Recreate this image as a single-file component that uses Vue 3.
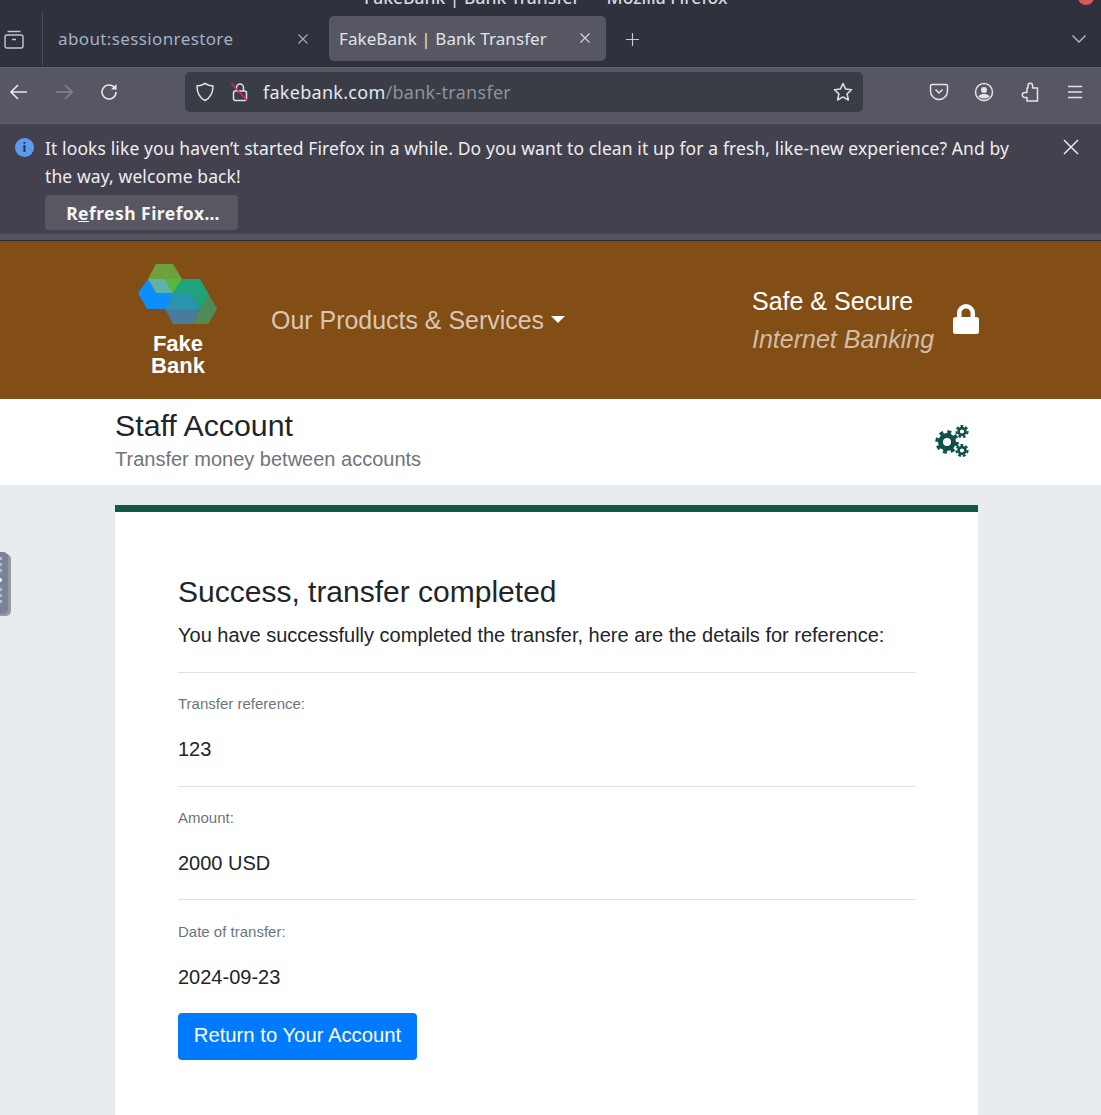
<script setup>
const details = [
  { label: 'Transfer reference:', value: '123' },
  { label: 'Amount:', value: '2000 USD' },
  { label: 'Date of transfer:', value: '2024-09-23' },
]
</script>

<template>
  <div class="page">
    <div class="chrome-top">
      <div class="title-row">
        <span class="window-title">FakeBank | Bank Transfer — Mozilla Firefox</span>
        <span class="win-dot"></span>
      </div>
      <div class="tab-row">
        <svg class="ico tabs-ico" viewBox="0 0 20 20" fill="none" stroke="#c5c8d0" stroke-width="1.4">
          <rect x="1" y="6" width="18" height="13" rx="2" />
          <path d="M3.5 2.5h13M8 10.5h4" />
        </svg>
        <span class="tab-sep"></span>
        <div class="tab">
          <span class="tab-text muted">about:sessionrestore</span>
          <svg class="tab-x" viewBox="0 0 12 12" stroke="#a9adb8" stroke-width="1.1"><path d="M1.5 1.5l9 9M10.5 1.5l-9 9" /></svg>
        </div>
        <div class="tab active">
          <span class="tab-text">FakeBank | Bank Transfer</span>
          <svg class="tab-x" viewBox="0 0 12 12" stroke="#d5d7dd" stroke-width="1.1"><path d="M1.5 1.5l9 9M10.5 1.5l-9 9" /></svg>
        </div>
        <svg class="plus" viewBox="0 0 16 16" stroke="#c9ccd3" stroke-width="1.2"><path d="M8 1v14M1 8h14" /></svg>
        <svg class="chev" viewBox="0 0 16 10" fill="none" stroke="#b9bcc5" stroke-width="1.3"><path d="M1.5 1.5L8 8l6.5-6.5" /></svg>
      </div>
    </div>

    <div class="toolbar">
      <div class="nav-btns">
        <svg class="ico" viewBox="0 0 20 20" fill="none" stroke="#e8e9ec" stroke-width="1.6"><path d="M18 10H2M9 3l-7 7 7 7" /></svg>
        <svg class="ico" viewBox="0 0 20 20" fill="none" stroke="#868891" stroke-width="1.6"><path d="M2 10h16M11 3l7 7-7 7" /></svg>
        <svg class="ico" viewBox="0 0 20 20" fill="none" stroke="#e8e9ec" stroke-width="1.6"><path d="M17 10a7 7 0 1 1-2.200-5.100L17 7" /><path d="M17.500 2v5.500H12" fill="#e8e9ec" stroke="none" /></svg>
      </div>
      <div class="urlbar">
        <svg class="ico shield" viewBox="0 0 20 20" fill="none" stroke="#dfe0e4" stroke-width="1.5"><path d="M10 1.500c2.500 1.600 5 2.300 8 2.500 0 7-2 11.500-8 14.500C4 15.500 2 11 2 4c3-.2 5.500-.9 8-2.500z" /></svg>
        <svg class="ico lock-off" viewBox="0 0 20 20" fill="none" stroke="#dfe0e4" stroke-width="1.500">
          <rect x="3.500" y="9" width="13" height="9.500" rx="2" />
          <path d="M6.500 9V5.500a3.500 3.500 0 0 1 7 0V9" />
          <path d="M1.500 1.500l15.500 17" stroke="#e22850" stroke-width="1.600" />
        </svg>
        <span class="url"><span class="url-host">fakebank.com</span><span class="url-path">/bank-transfer</span></span>
        <svg class="ico star" viewBox="0 0 20 20" fill="none" stroke="#dfe0e4" stroke-width="1.500" stroke-linejoin="round"><path d="M10 1.500l2.600 5.600 6 .7-4.500 4.100 1.300 6.100-5.400-3.100-5.400 3.100 1.300-6.100L1.400 7.800l6-.7z" /></svg>
      </div>
      <div class="tool-icons">
        <svg class="ico" viewBox="0 0 20 20" fill="none" stroke="#e3e4e8" stroke-width="1.500"><path d="M3 2.500h14a1.500 1.500 0 0 1 1.500 1.500v5a8.500 8.500 0 0 1-17 0V4A1.500 1.500 0 0 1 3 2.500z" /><path d="M6.500 7.500L10 11l3.500-3.500" /></svg>
        <svg class="ico" viewBox="0 0 20 20" fill="none" stroke="#e3e4e8" stroke-width="1.500"><circle cx="10" cy="10" r="8.500" /><circle cx="10" cy="8" r="3" fill="#e3e4e8" stroke="none" /><path d="M4.500 14.500c1-2 3-2.500 5.500-2.500s4.500.5 5.500 2.500c-1.500 1.500-3.500 2-5.500 2s-4-.5-5.500-2z" fill="#e3e4e8" stroke="none" /></svg>
        <svg class="ico" viewBox="0 0 20 20" fill="none" stroke="#e3e4e8" stroke-width="1.500" stroke-linejoin="round"><path d="M8 6V3.500a2.300 2.300 0 0 1 4.600 0V6h4.900v13H7v-3.500H4.800a2.500 2.500 0 0 1 0-5H7V6z" /></svg>
        <svg class="ico" viewBox="0 0 20 20" fill="none" stroke="#e3e4e8" stroke-width="1.500"><path d="M3 4.500h14M3 10h14M3 15.500h14" /></svg>
      </div>
    </div>

    <div class="notice">
      <div class="notice-body">
        <span class="info">i</span>
        <div class="notice-main">
          <p class="notice-text">It looks like you haven’t started Firefox in a while. Do you want to clean it up for a fresh, like-new experience? And by the way, welcome back!</p>
          <button class="refresh">R<u>e</u>fresh Firefox…</button>
        </div>
        <svg class="notice-x" viewBox="0 0 16 16" stroke="#e8e9ec" stroke-width="1.500"><path d="M1 1l14 14M15 1L1 15" /></svg>
      </div>
    </div>

    <header class="brand-bar">
      <div class="logo">
        <svg class="logo-mark" viewBox="0 0 80 62">
          <polygon points="18,2 35,2 44,17 35,31 27,17 10,17" fill="#6ea03c" />
          <polygon points="10,17 18,31 52,31 62,47 9,47 0,31" fill="#0d8eff" />
          <polygon points="10,17 27,17 35,31 18,31" fill="#5fb2a8" />
          <polygon points="27,17 44,17 35,31" fill="#56b83a" />
          <polygon points="44,17 62,17 79,47 62,47 52,31 35,31" fill="#1fa37a" />
          <polygon points="70,33 79,47 70,62 54,62 62,47" fill="#4f8b57" />
          <polygon points="27,47 35,31 52,31 62,47" fill="#2a94ae" />
          <polygon points="27,47 62,47 54,62 35,62" fill="#4a7a9e" />
        </svg>
        <div class="logo-text">Fake<br />Bank</div>
      </div>
      <div class="products">Our Products &amp; Services<span class="caret"></span></div>
      <div class="secure">
        <div class="secure-text">
          <div class="secure-a">Safe &amp; Secure</div>
          <div class="secure-b">Internet Banking</div>
        </div>
        <svg class="big-lock" viewBox="0 0 26 30" fill="#fff"><path d="M4 13V9a9 9 0 0 1 18 0v4h1.500A2.500 2.500 0 0 1 26 15.500v12a2.500 2.500 0 0 1-2.500 2.500h-21A2.500 2.500 0 0 1 0 27.500v-12A2.500 2.500 0 0 1 2.500 13zm4.500 0h9V9a4.500 4.500 0 0 0-9 0z" /></svg>
      </div>
    </header>

    <section class="account-bar">
      <div class="account-inner">
        <div class="account-head">
          <h1 class="account-title">Staff Account</h1>
          <div class="account-sub">Transfer money between accounts</div>
        </div>
        <svg class="gears" viewBox="0 0 34 32">
          <g fill="none" stroke="#0f5148">
            <circle cx="12" cy="17" r="6.500" stroke-width="5" />
            <circle cx="12" cy="17" r="10" stroke-width="3.500" stroke-dasharray="3.900 3.950" />
            <circle cx="27" cy="6.500" r="3.400" stroke-width="2.600" />
            <circle cx="27" cy="6.500" r="5.500" stroke-width="2.200" stroke-dasharray="2.700 2.060" />
            <circle cx="27" cy="25.500" r="3.400" stroke-width="2.600" />
            <circle cx="27" cy="25.500" r="5.500" stroke-width="2.200" stroke-dasharray="2.700 2.060" />
          </g>
        </svg>
      </div>
    </section>

    <main class="content">
      <div class="handle">
        <span></span><span></span><span></span><span class="dot"></span><span></span><span></span><span></span>
      </div>
      <article class="card">
        <h2 class="card-title">Success, transfer completed</h2>
        <p class="card-lead">You have successfully completed the transfer, here are the details for reference:</p>
        <div v-for="d in details" :key="d.label" class="detail">
          <div class="detail-label">{{ d.label }}</div>
          <div class="detail-value">{{ d.value }}</div>
        </div>
        <button class="return">Return to Your Account</button>
      </article>
    </main>
  </div>
</template>

<style scoped>
.page {
  width: 1101px;
  height: 1115px;
  overflow: hidden;
  position: relative;
  font-family: "Liberation Sans", Arial, sans-serif;
  color: #212529;
  background: #e9ecef;
}
.ico { width: 20px; height: 20px; flex: none; display: block; }

.chrome-top { height: 67px; background: #2f323d; }
.title-row { height: 10px; position: relative; overflow: hidden; }
.window-title {
  position: absolute;
  left: 364px;
  top: -13px;
  font: 500 17.500px/20px "Noto Sans", sans-serif;
  white-space: pre;
  color: #d6d8de;
}
.win-dot {
  position: absolute;
  left: 1078px;
  top: -11px;
  width: 16px;
  height: 16px;
  border-radius: 50%;
  background: #e0565b;
}
.tab-row { height: 57px; display: flex; align-items: center; position: relative; }
.tabs-ico { margin-left: 4px; width: 20px; height: 20px; }
.tab-sep { width: 1px; height: 55px; background: #4a4d58; margin-left: 18px; margin-right: 1px; }
.tab {
  width: 285px;
  height: 45px;
  display: flex;
  align-items: center;
  justify-content: space-between;
  padding: 0 20px 0 14px;
  box-sizing: border-box;
  border-radius: 5px;
}
.tab.active { width: 277px; background: #565762; margin-top: -1px; padding: 0 15px 0 10px; }
.tab-text { font: 17px/24px "Noto Sans", sans-serif; color: #e1e3e8; white-space: nowrap; padding-top: 1px; letter-spacing: .08px; }
.tab-text.muted { color: #a3b1c4; letter-spacing: .38px; }
.tab-x { width: 12px; height: 12px; }
.plus { width: 15px; height: 15px; margin-left: 19px; margin-top: 1px; }
.chev { width: 16px; height: 10px; margin-left: auto; margin-right: 14px; }

.toolbar {
  height: 56px;
  background: #565762;
  border-top: 1px solid #5f606b;
  box-sizing: border-box;
  display: flex;
  align-items: flex-start;
  padding-top: 4px;
}
.nav-btns { display: flex; gap: 25px; margin-left: 9px; width: 176px; flex: none; margin-top: 10px; }
.urlbar {
  width: 678px;
  height: 40px;
  flex: none;
  background: #3a3c46;
  border-radius: 5px;
  display: flex;
  align-items: center;
  padding: 0 10px;
  box-sizing: border-box;
}
.lock-off { margin-left: 15px; }
.url { margin-left: 13px; font: 18px/24px "Noto Sans", sans-serif; white-space: nowrap; letter-spacing: .28px; }
.url-host { color: #e6e8ec; }
.url-path { color: #8f919a; }
.star { margin-left: auto; }
.tool-icons { display: flex; gap: 25.500px; margin-left: 65.500px; margin-top: 10px; }

.notice {
  height: 117px;
  background: #42414d;
  border-top: 1px solid #5c5d68;
  border-bottom: 6px solid #53545f;
  box-sizing: border-box;
}
.notice-body { display: flex; padding: 0 22px 0 15px; align-items: flex-start; height: 100%; position: relative; }
.info {
  width: 19px;
  height: 19px;
  border-radius: 50%;
  background: #5e9bf0;
  color: #27324a;
  font: 700 13px/19px "Noto Sans", sans-serif;
  text-align: center;
  margin-top: 14px;
  flex: none;
}
.notice-main { margin-left: 11px; flex: 1; }
.notice-text {
  margin: 10px 0 0;
  width: 975px;
  font: 17.500px/28px "Noto Sans", sans-serif;
  letter-spacing: .105px;
  color: #eceef2;
}
.refresh {
  display: block;
  width: 193px;
  height: 35px;
  margin-top: 5px;
  padding: 1px 0 0 3px;
  border: 0;
  border-radius: 4px;
  background: #585762;
  color: #f4f5f7;
  font: 700 17.500px/33px "Noto Sans", sans-serif;
  letter-spacing: .45px;
}
.notice-x { width: 16px; height: 16px; margin-top: 15px; flex: none; }

.brand-bar {
  height: 159px;
  border-top: 1px solid #2a2c35;
  box-sizing: border-box;
  background: #834d16;
  display: flex;
  align-items: center;
}
.logo { width: 80px; margin-left: 138px; display: flex; flex-direction: column; align-items: center; margin-bottom: 1px; }
.logo-mark { width: 80px; height: 62px; display: block; }
.logo-text { font-weight: 700; font-size: 22px; line-height: 22px; color: #fff; text-align: center; margin-top: 9px; }
.products { margin-left: 53px; font-size: 24.950px; color: #d9c7b3; width: 481px; white-space: nowrap; }
.caret {
  display: inline-block;
  margin-left: 7px;
  vertical-align: 6px;
  border-top: 7px solid #fff;
  border-left: 7px solid transparent;
  border-right: 7px solid transparent;
}
.secure { display: flex; align-items: center; }
.secure-text { width: 201px; }
.secure-a { font-size: 25px; line-height: 38px; color: #fff; }
.secure-b { font-size: 25px; line-height: 38px; font-style: italic; color: #d2bda6; }
.big-lock { width: 26px; height: 30px; flex: none; margin-bottom: 2px; }

.account-bar { height: 86px; background: #fff; }
.account-inner {
  width: 863px;
  margin-left: 115px;
  display: flex;
  justify-content: space-between;
  align-items: center;
  height: 100%;
  padding-right: 9px;
  box-sizing: border-box;
}
.account-head { margin-top: -2px; }
.account-title { margin: 0; font-size: 30.300px; line-height: 36px; font-weight: 400; color: #212529; }
.account-sub { font-size: 20px; line-height: 30px; color: #6c757d; }
.gears { width: 34px; height: 32px; margin-top: -2px; }

.content { position: relative; padding: 20px 0 0 115px; }
.handle {
  position: absolute;
  left: -8px;
  top: 67px;
  width: 16px;
  height: 62px;
  padding: 5px 6px 0 0;
  box-sizing: border-box;
  background: #76839a;
  border-radius: 5px;
  box-shadow: 3px 2px 0 #999;
  display: flex;
  flex-direction: column;
  align-items: flex-end;
  gap: 3px;
}
.handle span { width: 4px; height: 3px; background: #b4bccb; }
.handle .dot { width: 4px; height: 4px; border-radius: 50%; background: #fff; margin: 3px 0; }
.card {
  width: 863px;
  height: 640px;
  background: #fff;
  border-top: 7px solid #13564a;
  box-sizing: border-box;
  padding: 62px 62px 0 63px;
}
.card-title { margin: 0; font-size: 30px; line-height: 36px; font-weight: 400; }
.card-lead { margin: 10px 0 22px; font-size: 20px; line-height: 30px; white-space: nowrap; }
.detail { border-top: 1px solid #dee2e6; height: 113.670px; padding-top: 21.300px; box-sizing: border-box; }
.detail-label { font-size: 15px; line-height: 20px; color: #6c757d; }
.detail-value { font-size: 20px; line-height: 30px; margin-top: 20px; }
.return {
  display: block;
  width: 239px;
  height: 47px;
  padding: 0 0 2px;
  border: 0;
  border-radius: 4px;
  background: #007bff;
  color: #fff;
  font-family: inherit;
  font-size: 20.300px;
  line-height: 45px;
}
</style>

<style>
html, body { margin: 0; overflow: hidden; }
</style>
